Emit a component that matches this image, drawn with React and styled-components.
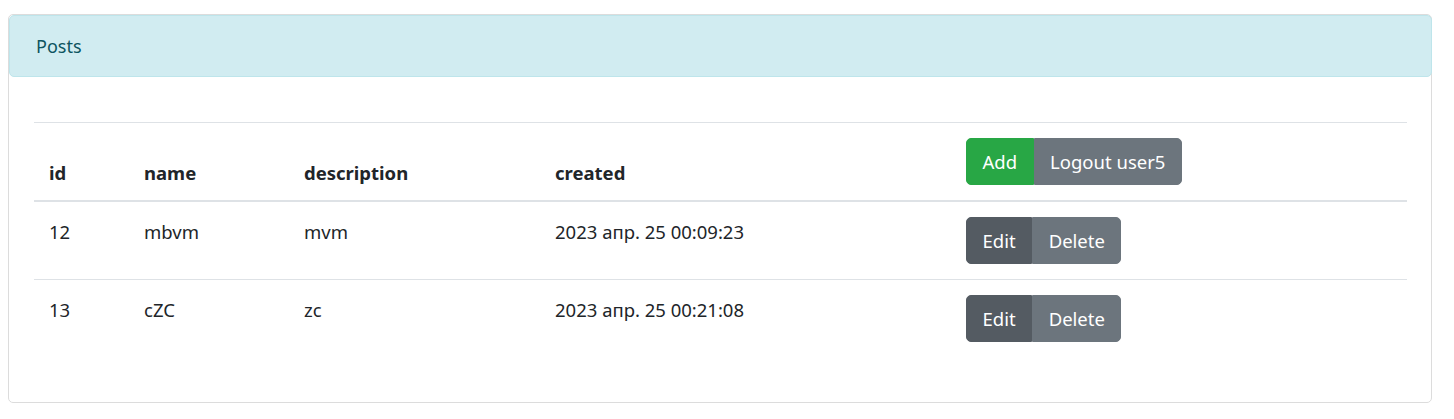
import styled, { createGlobalStyle } from "styled-components";

const GlobalStyle = createGlobalStyle`
    body {
        margin: 0;
        padding: 14px 22px 0 8px;
        font-family: "Noto Sans", "Open Sans", sans-serif;
        font-size: 18px;
        color: #212529;
        background: #fff;
    }
`;

// Data
const POSTS = [
    { id: 12, name: "mbvm", description: "mvm", created: "2023 апр. 25 00:09:23" },
    { id: 13, name: "cZC", description: "zc", created: "2023 апр. 25 00:21:08" },
];

const App = () => {
    return (
        <>
            <GlobalStyle />
            <Card>
                <CardHeader>Posts</CardHeader>
                <CardBody>
                    <Table>
                        <colgroup>
                            <col style={{ width: 95 }} />
                            <col style={{ width: 160 }} />
                            <col style={{ width: 251 }} />
                            <col style={{ width: 411 }} />
                            <col />
                        </colgroup>
                        <thead>
                            <tr>
                                <Th>id</Th>
                                <Th>name</Th>
                                <Th>description</Th>
                                <Th>created</Th>
                                <Th>
                                    <BtnGroup>
                                        <Button variant="success">Add</Button>
                                        <Button variant="secondary">Logout user5</Button>
                                    </BtnGroup>
                                </Th>
                            </tr>
                        </thead>
                        <tbody>
                            {POSTS.map((post) => (
                                <tr key={post.id}>
                                    <Td>{post.id}</Td>
                                    <Td>{post.name}</Td>
                                    <Td>{post.description}</Td>
                                    <Td>{post.created}</Td>
                                    <Td>
                                        <BtnGroup>
                                            <Button variant="dark">Edit</Button>
                                            <Button variant="secondary">Delete</Button>
                                        </BtnGroup>
                                    </Td>
                                </tr>
                            ))}
                        </tbody>
                    </Table>
                </CardBody>
            </Card>
        </>
    );
};

const Card = styled.div`
    border: 1px solid #dcdcdc;
    border-radius: 5px;
    background: #fff;
`;

const CardHeader = styled.div`
    background: #d1ecf1;
    border: 1px solid #bee5eb;
    border-radius: 5px;
    margin: 0 -1px 0 0;
    height: 60px;
    padding: 0 26px;
    display: flex;
    align-items: center;
    color: #0c5460;
    font-size: 18px;
`;

const CardBody = styled.div`
    padding: 45px 24px 45px 25px;
`;

const Table = styled.table`
    width: 100%;
    border-collapse: collapse;
    table-layout: fixed;
    border-top: 1px solid #dee2e6;
    font-size: 18.5px;
`;

const Th = styled.th`
    text-align: left;
    font-weight: 700;
    padding: 15px 15px;
    line-height: 24px;
    vertical-align: bottom;
    border-bottom: 2px solid #dee2e6;
`;

const Td = styled.td`
    padding: 18px 15px 15px;
    line-height: 24px;
    vertical-align: top;
    border-bottom: 1px solid #dee2e6;
    tr:last-child > & {
        border-bottom: none;
    }
`;

const BtnGroup = styled.div`
    display: inline-flex;
    margin-top: -3px;
    th & {
        margin-top: 0;
    }
`;

const COLORS = {
    success: "#28a745",
    secondary: "#6c757d",
    dark: "#545b62",
};

const Button = styled.button`
    font-family: inherit;
    font-size: 18.5px;
    font-weight: 400;
    line-height: 27px;
    height: 47px;
    padding: 0 15.5px;
    color: #fff;
    background: ${(props) => COLORS[props.variant]};
    border: 1px solid ${(props) => COLORS[props.variant]};
    border-radius: 0;
    &:first-child {
        border-radius: 5px 0 0 5px;
    }
    &:last-child {
        border-radius: 0 5px 5px 0;
    }
`;

export default App;
